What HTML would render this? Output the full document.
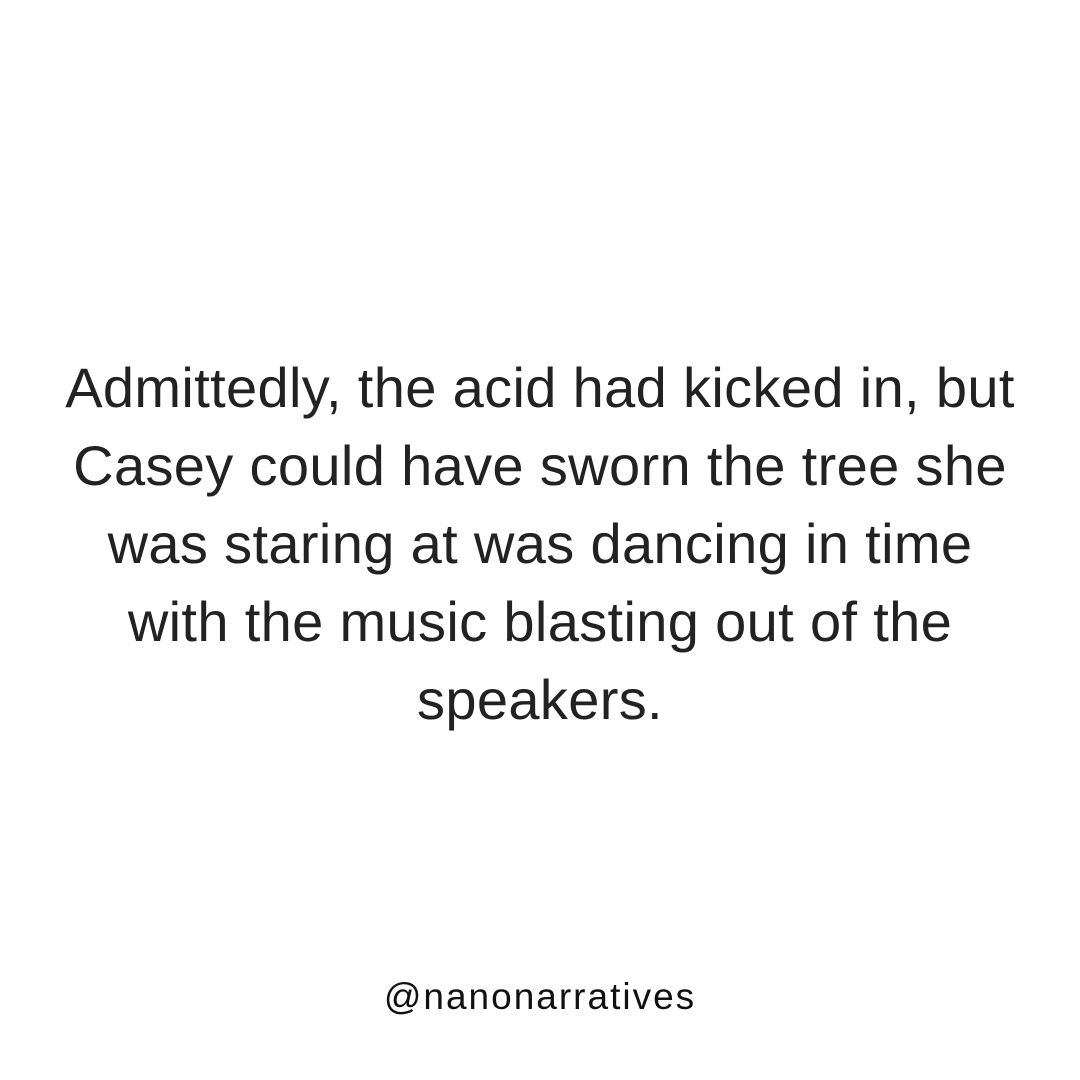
<!DOCTYPE html>
<html><head><meta charset="utf-8"><style>
html,body{margin:0;padding:0;background:#fff;}
body{width:1080px;height:1080px;position:relative;overflow:hidden;font-family:"Liberation Sans","DejaVu Sans",sans-serif;color:#222;}
.t{position:absolute;left:0;width:1080px;top:349px;text-align:center;font-size:56px;line-height:78px;font-weight:normal;letter-spacing:0.35px;}
.h{position:absolute;left:0;width:1080px;top:975px;text-align:center;font-size:37px;line-height:44px;letter-spacing:2px;color:#111;}
</style></head><body>
<div class="t">Admittedly, the acid had kicked in, but<br>Casey could have sworn the tree she<br>was staring at was dancing in time<br>with the music blasting out of the<br>speakers.</div>
<div class="h">@nanonarratives</div>
</body></html>
